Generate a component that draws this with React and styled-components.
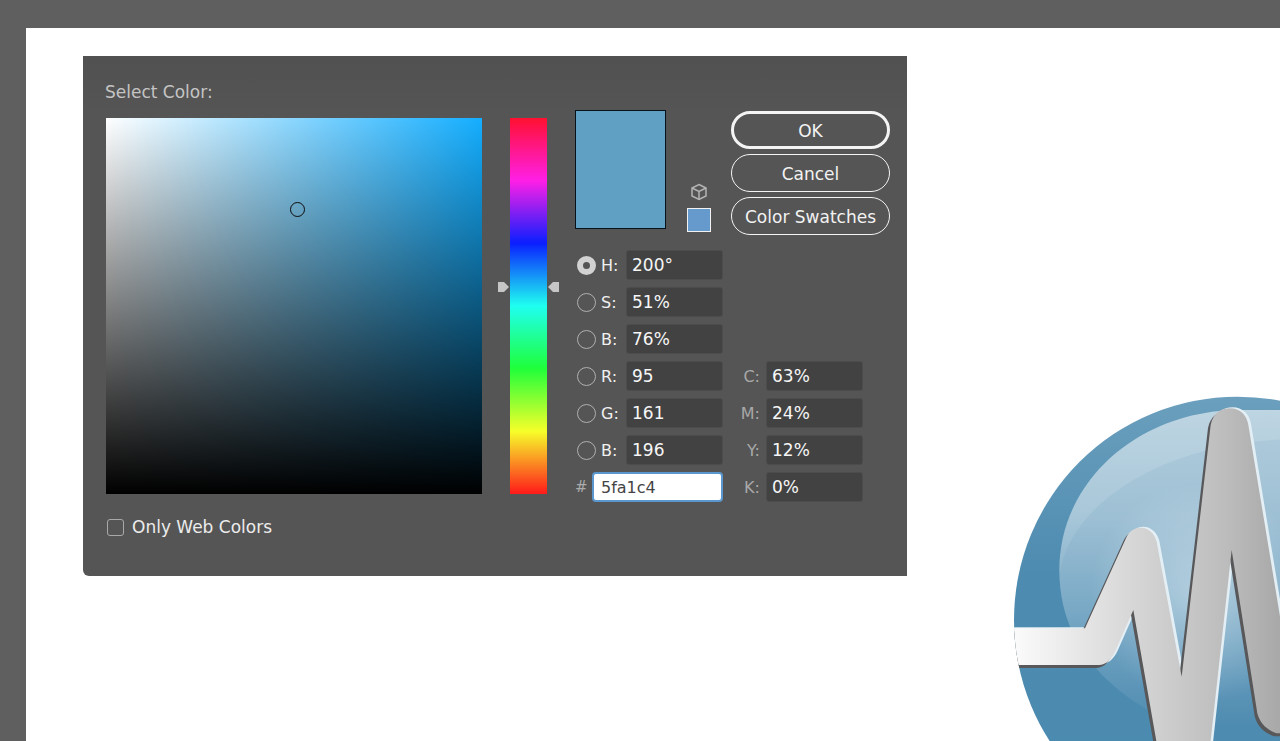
import React from "react";
import styled, { createGlobalStyle } from "styled-components";

const GlobalStyle = createGlobalStyle`
  html, body {
    margin: 0;
    height: 100%;
    background: #5f5f5f;
    font-family: "DejaVu Sans", "Open Sans", sans-serif;
  }
`;

const Page = styled.div`
  height: 741px;
  box-sizing: border-box;
  padding: 28px 0 0 26px;
  overflow: hidden;
`;

const Canvas = styled.div`
  position: relative;
  height: 713px;
  box-sizing: border-box;
  padding: 28px 0 0 57px;
  background: #fff;
  overflow: hidden;
`;

const Dialog = styled.div`
  display: flex;
  width: 824px;
  height: 520px;
  background: linear-gradient(to bottom, #515151, #555 60px);
  border-radius: 0 0 0 6px;
`;

const PickerColumn = styled.div`
  width: 376px;
  margin-left: 23px;
`;

const Title = styled.div`
  height: 62px;
  box-sizing: border-box;
  padding-top: 26px;
  margin-left: -1px;
  font-size: 17px;
  line-height: 20px;
  color: #c4c4c4;
`;

const SatField = styled.div`
  position: relative;
  width: 376px;
  height: 376px;
  background: linear-gradient(to top, #000, rgba(0, 0, 0, 0)),
    linear-gradient(to right, #fff, #14aeff);
`;

const Cursor = styled.div`
  position: absolute;
  left: 184px;
  top: 84px;
  width: 13px;
  height: 13px;
  border: 1.5px solid #0b0b0b;
  border-radius: 50%;
`;

const WebColors = styled.label`
  display: flex;
  align-items: center;
  gap: 8px;
  margin: 22px 0 0 1px;
  font-size: 17px;
  line-height: 22px;
  color: #ececec;
`;

const Checkbox = styled.span`
  width: 15px;
  height: 15px;
  border: 1.5px solid #a9a9a9;
  border-radius: 3px;
`;

const HueColumn = styled.div`
  position: relative;
  width: 37px;
  height: 376px;
  margin: 62px 0 0 28px;
  background: linear-gradient(
    to bottom,
    #ff1030 0%,
    #ff1fe6 16.6%,
    #0a1fff 33.3%,
    #1ffff0 50%,
    #1fff3a 66.6%,
    #f6ff2a 83.3%,
    #ff1a1a 100%
  );
`;

const Marker = styled.svg`
  position: absolute;
  top: 163px;
  ${(p) => (p.$side === "left" ? "left: -12px;" : "right: -12px;")}
`;

const Controls = styled.div`
  width: 316px;
  margin: 54px 0 0 28px;
`;

const TopRow = styled.div`
  display: flex;
  height: 125px;
`;

const Preview = styled.div`
  width: 91px;
  height: 119px;
  box-sizing: border-box;
  background: #5fa0c3;
  border: 1.5px solid #08121a;
`;

const GamutColumn = styled.div`
  display: flex;
  flex-direction: column;
  align-items: center;
  gap: 7px;
  width: 24px;
  height: 122px;
  justify-content: flex-end;
  margin-left: 21px;
`;

const WebSwatch = styled.div`
  width: 24px;
  height: 24px;
  box-sizing: border-box;
  background: #6699cc;
  border: 1.5px solid #f2f2f2;
`;

const Buttons = styled.div`
  display: flex;
  flex-direction: column;
  gap: 5px;
  width: 159px;
  margin: 1px 0 0 20px;
`;

const Button = styled.button`
  height: 38px;
  padding: 1px 0 0;
  box-sizing: border-box;
  background: transparent;
  border: ${(p) => (p.$primary ? "3px" : "1.5px")} solid #f4f4f4;
  border-radius: 19px;
  font-family: inherit;
  font-size: 17px;
  color: #f2f2f2;
`;

const Fields = styled.div`
  display: flex;
  flex-direction: column;
  gap: 7px;
  margin-top: 15px;
`;

const FieldRow = styled.div`
  display: flex;
  align-items: center;
  height: 30px;
`;

const RadioLabel = styled.div`
  display: flex;
  align-items: center;
  width: 51px;
  padding-left: 2px;
  box-sizing: border-box;
  gap: 5px;
  font-size: 16px;
  color: #f0f0f0;
`;

const Radio = styled.span`
  display: flex;
  align-items: center;
  justify-content: center;
  flex: none;
  width: 19px;
  height: 19px;
  box-sizing: border-box;
  border-radius: 50%;
  border: ${(p) => (p.$checked ? "6.5px solid #d2d2d2" : "1.5px solid #b0b0b0")};
  background: ${(p) => (p.$checked ? "#555" : "transparent")};
`;

const ValueBox = styled.div`
  width: 97px;
  height: 30px;
  box-sizing: border-box;
  padding-left: 5px;
  background: #424242;
  border: 1.5px solid #4c4c4c;
  border-radius: 3px;
  font-size: 17px;
  line-height: 28px;
  color: #f6f6f6;
`;

const SideLabel = styled.div`
  width: 43px;
  padding-right: 6px;
  box-sizing: border-box;
  text-align: right;
  font-size: 16px;
  color: #a8a8a8;
`;

const Hash = styled.div`
  width: 17px;
  font-size: 15px;
  color: #ababab;
`;

const HexInput = styled.div`
  width: 131px;
  height: 30px;
  box-sizing: border-box;
  padding-left: 7px;
  background: #fff;
  border: 2px solid #5a97cf;
  border-radius: 4px;
  font-size: 16px;
  line-height: 27px;
  color: #444;
`;

const Logo = styled.svg`
  position: absolute;
  left: 974px;
  top: 352px;
`;

const rows = [
  { label: "H:", value: "200°", checked: true },
  { label: "S:", value: "51%" },
  { label: "B:", value: "76%" },
  { label: "R:", value: "95", side: "C:", sideValue: "63%" },
  { label: "G:", value: "161", side: "M:", sideValue: "24%" },
  { label: "B:", value: "196", side: "Y:", sideValue: "12%" },
];

const wavePath =
  "M30 745 L255 745 L380 470 C400 432 455 432 470 485 L545 890 L632 135 C640 100 660 85 690 85 C720 85 740 105 745 135 L860 830 L860 1060 L830 1060 C800 1050 780 1030 772 1000 L695 510 L630 1100 L472 1100 L400 690 L345 815 C330 845 315 855 290 855 L30 855 Z";

const innerArc = "M178 590 C200 380 480 190 860 178 L860 1083 L640 1083 C420 1000 190 860 178 590 Z";

function LogoArt() {
  return (
    <Logo width="280" height="361" viewBox="0 0 840 1083">
      <defs>
        <linearGradient id="disc" x1="0" y1="0" x2="0" y2="1">
          <stop offset="0" stopColor="#6b9fbd" />
          <stop offset="0.4" stopColor="#4d8bb0" />
          <stop offset="1" stopColor="#4b8ab0" />
        </linearGradient>
        <linearGradient id="rim" gradientUnits="userSpaceOnUse" x1="0" y1="90" x2="0" y2="1040">
          <stop offset="0" stopColor="#bed5e2" />
          <stop offset="0.33" stopColor="#a8c7d9" />
          <stop offset="0.65" stopColor="#7babc7" />
          <stop offset="1" stopColor="#4f8cb1" />
        </linearGradient>
        <radialGradient id="glow" gradientUnits="userSpaceOnUse" cx="600" cy="640" r="330">
          <stop offset="0" stopColor="#ffffff" stopOpacity="0.4" />
          <stop offset="1" stopColor="#ffffff" stopOpacity="0" />
        </radialGradient>
        <linearGradient id="wave" gradientUnits="userSpaceOnUse" x1="42" y1="0" x2="840" y2="0">
          <stop offset="0" stopColor="#fbfbfb" />
          <stop offset="0.45" stopColor="#d6d6d6" />
          <stop offset="0.8" stopColor="#bcbcbc" />
          <stop offset="1" stopColor="#a8a8a8" />
        </linearGradient>
        <clipPath id="discClip">
          <circle cx="712" cy="720" r="670" />
        </clipPath>
      </defs>
      <circle cx="712" cy="720" r="670" fill="url(#disc)" />
      <g clipPath="url(#discClip)">
        <path
          d="M178 570 C178 300 420 90 720 90 L860 90 L860 1083 L640 1083 C420 1000 178 860 178 570 Z"
          fill="url(#rim)"
        />
        <path d={innerArc} fill="#4d8bb0" opacity="0.1" />
        <rect x="178" y="250" width="662" height="833" fill="url(#glow)" />
        <path d={wavePath} fill="#e3eff5" transform="translate(8 -3)" />
        <path d={wavePath} fill="#58585a" transform="translate(-8 9)" />
        <path d={wavePath} fill="url(#wave)" />
      </g>
    </Logo>
  );
}

export default function App() {
  return (
    <Page>
      <GlobalStyle />
      <Canvas>
        <Dialog>
          <PickerColumn>
            <Title>Select Color:</Title>
            <SatField>
              <Cursor />
            </SatField>
            <WebColors>
              <Checkbox />
              Only Web Colors
            </WebColors>
          </PickerColumn>
          <HueColumn>
            <Marker $side="left" width="12" height="12" viewBox="0 0 12 12">
              <path d="M0 1 H6 L11 6 L6 11 H0 Z" fill="#c6c6c6" />
            </Marker>
            <Marker $side="right" width="12" height="12" viewBox="0 0 12 12">
              <path d="M12 1 H6 L1 6 L6 11 H12 Z" fill="#c6c6c6" />
            </Marker>
          </HueColumn>
          <Controls>
            <TopRow>
              <Preview />
              <GamutColumn>
                <svg width="18" height="18" viewBox="0 0 18 18" fill="none" stroke="#b4b4b4" strokeWidth="1.5">
                  <path d="M9 1.5 L16 5 V13 L9 16.5 L2 13 V5 Z" />
                  <path d="M2 5 L9 8.5 L16 5 M9 8.5 V16.5" />
                </svg>
                <WebSwatch />
              </GamutColumn>
              <Buttons>
                <Button $primary>OK</Button>
                <Button>Cancel</Button>
                <Button>Color Swatches</Button>
              </Buttons>
            </TopRow>
            <Fields>
              {rows.map((row) => (
                <FieldRow key={row.label + row.value}>
                  <RadioLabel>
                    <Radio $checked={row.checked} />
                    {row.label}
                  </RadioLabel>
                  <ValueBox>{row.value}</ValueBox>
                  {row.side && <SideLabel>{row.side}</SideLabel>}
                  {row.side && <ValueBox>{row.sideValue}</ValueBox>}
                </FieldRow>
              ))}
              <FieldRow>
                <Hash>#</Hash>
                <HexInput>5fa1c4</HexInput>
                <SideLabel>K:</SideLabel>
                <ValueBox>0%</ValueBox>
              </FieldRow>
            </Fields>
          </Controls>
        </Dialog>
        <LogoArt />
      </Canvas>
    </Page>
  );
}
